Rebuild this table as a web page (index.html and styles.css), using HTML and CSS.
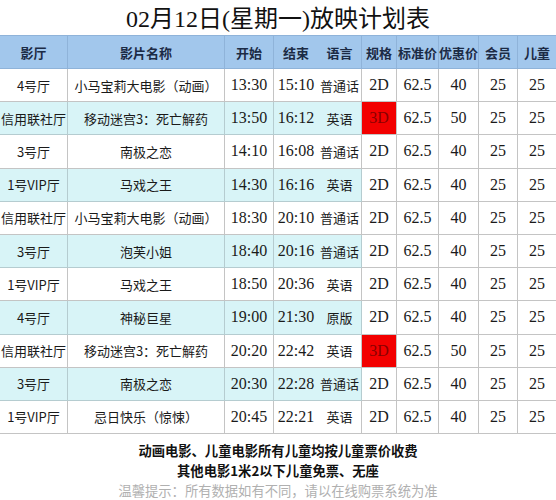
FILE: index.html
```html
<!DOCTYPE html>
<html lang="zh">
<head>
<meta charset="utf-8">
<link rel="stylesheet" href="styles.css">
</head>
<body>
<div class="page">
  <h1 class="title">02月12日(星期一)放映计划表</h1>
  <div class="grid">
    <div class="h">影厅</div><div class="h">影片名称</div><div class="h">开始</div><div class="h nb">结束</div><div class="h">语言</div><div class="h">规格</div><div class="h">标准价</div><div class="h">优惠价</div><div class="h">会员</div><div class="h">儿童</div>

    <div class="c">4号厅</div><div class="c">小马宝莉大电影（动画）</div><div class="c n">13:30</div><div class="c n nb">15:10</div><div class="c">普通话</div><div class="c n">2D</div><div class="c n">62.5</div><div class="c n">40</div><div class="c n">25</div><div class="c n">25</div>

    <div class="c cy">信用联社厅</div><div class="c cy">移动迷宫3：死亡解药</div><div class="c cy n">13:50</div><div class="c cy n nb">16:12</div><div class="c cy">英语</div><div class="c n red">3D</div><div class="c n">62.5</div><div class="c n">50</div><div class="c n">25</div><div class="c n">25</div>

    <div class="c">3号厅</div><div class="c">南极之恋</div><div class="c n">14:10</div><div class="c n nb">16:08</div><div class="c">普通话</div><div class="c n">2D</div><div class="c n">62.5</div><div class="c n">40</div><div class="c n">25</div><div class="c n">25</div>

    <div class="c cy">1号VIP厅</div><div class="c cy">马戏之王</div><div class="c cy n">14:30</div><div class="c cy n nb">16:16</div><div class="c cy">英语</div><div class="c n">2D</div><div class="c n">62.5</div><div class="c n">40</div><div class="c n">25</div><div class="c n">25</div>

    <div class="c">信用联社厅</div><div class="c">小马宝莉大电影（动画）</div><div class="c n">18:30</div><div class="c n nb">20:10</div><div class="c">普通话</div><div class="c n">2D</div><div class="c n">62.5</div><div class="c n">40</div><div class="c n">25</div><div class="c n">25</div>

    <div class="c cy">3号厅</div><div class="c cy">泡芙小姐</div><div class="c cy n">18:40</div><div class="c cy n nb">20:16</div><div class="c cy">普通话</div><div class="c n">2D</div><div class="c n">62.5</div><div class="c n">40</div><div class="c n">25</div><div class="c n">25</div>

    <div class="c">1号VIP厅</div><div class="c">马戏之王</div><div class="c n">18:50</div><div class="c n nb">20:36</div><div class="c">英语</div><div class="c n">2D</div><div class="c n">62.5</div><div class="c n">40</div><div class="c n">25</div><div class="c n">25</div>

    <div class="c cy">4号厅</div><div class="c cy">神秘巨星</div><div class="c cy n">19:00</div><div class="c cy n nb">21:30</div><div class="c cy">原版</div><div class="c n">2D</div><div class="c n">62.5</div><div class="c n">40</div><div class="c n">25</div><div class="c n">25</div>

    <div class="c">信用联社厅</div><div class="c">移动迷宫3：死亡解药</div><div class="c n">20:20</div><div class="c n nb">22:42</div><div class="c">英语</div><div class="c n red">3D</div><div class="c n">62.5</div><div class="c n">50</div><div class="c n">25</div><div class="c n">25</div>

    <div class="c cy">3号厅</div><div class="c cy">南极之恋</div><div class="c cy n">20:30</div><div class="c cy n nb">22:28</div><div class="c cy">普通话</div><div class="c n">2D</div><div class="c n">62.5</div><div class="c n">40</div><div class="c n">25</div><div class="c n">25</div>

    <div class="c">1号VIP厅</div><div class="c">忌日快乐（惊悚）</div><div class="c n">20:45</div><div class="c n nb">22:21</div><div class="c">英语</div><div class="c n">2D</div><div class="c n">62.5</div><div class="c n">40</div><div class="c n">25</div><div class="c n">25</div>
  </div>
  <div class="notes">
    <p class="note">动画电影、儿童电影所有儿童均按儿童票价收费</p>
    <p class="note">其他电影1米2以下儿童免票、无座</p>
    <p class="tip">温馨提示：所有数据如有不同，请以在线购票系统为准</p>
  </div>
</div>
</body>
</html>
```

FILE: styles.css
```css
html, body {
  margin: 0;
  padding: 0;
  background: #ffffff;
}
.page {
  width: 556px;
  height: 500px;
  overflow: hidden;
  font-family: "Liberation Serif", "Noto Sans CJK SC", serif;
  color: #111;
}
.title {
  margin: 0;
  height: 35px;
  line-height: 38px;
  text-align: center;
  font-size: 24px;
  font-weight: normal;
  color: #111;
}
.grid {
  display: grid;
  grid-template-columns: 68px 157px 49px 44px 44px 35px 42px 40px 39px 38px;
  grid-template-rows: 33px repeat(11, 33.2px);
  border-top: 1px solid #8fb3d9;
}
.grid > div {
  box-sizing: border-box;
  display: flex;
  align-items: center;
  justify-content: center;
  border-right: 1px solid #c4c4c4;
  border-bottom: 1px solid #c4c4c4;
  white-space: nowrap;
}
.grid > div:nth-child(10n) {
  border-right: none;
}
.h {
  background: #a2c7ec;
  font-family: "Noto Sans CJK SC", sans-serif;
  font-weight: bold;
  font-size: 13px;
  color: #1c2b45;
  border-right-color: #8fb3d9 !important;
  border-bottom-color: #8fb3d9 !important;
}
.c {
  font-family: "Noto Sans CJK SC", sans-serif;
  font-size: 13px;
  color: #1a1a1a;
}
.c.n {
  font-family: "Liberation Serif", serif;
  font-size: 16px;
}
.cy {
  background: #d8f4f7;
  border-right-color: #b5ccd0 !important;
  border-bottom-color: #b5ccd0 !important;
}
.grid > div.nb {
  border-right: none;
}
.red {
  background: #f20000;
  color: #8a0000 !important;
}
.notes {
  padding-top: 7px;
  text-align: center;
  font-family: "Noto Sans CJK SC", sans-serif;
}
.note {
  margin: 0;
  font-size: 13.3px;
  line-height: 20px;
  font-weight: bold;
  color: #111;
}
.tip {
  margin: 0;
  font-size: 13.3px;
  line-height: 20px;
  color: #b0b0b0;
}
```
